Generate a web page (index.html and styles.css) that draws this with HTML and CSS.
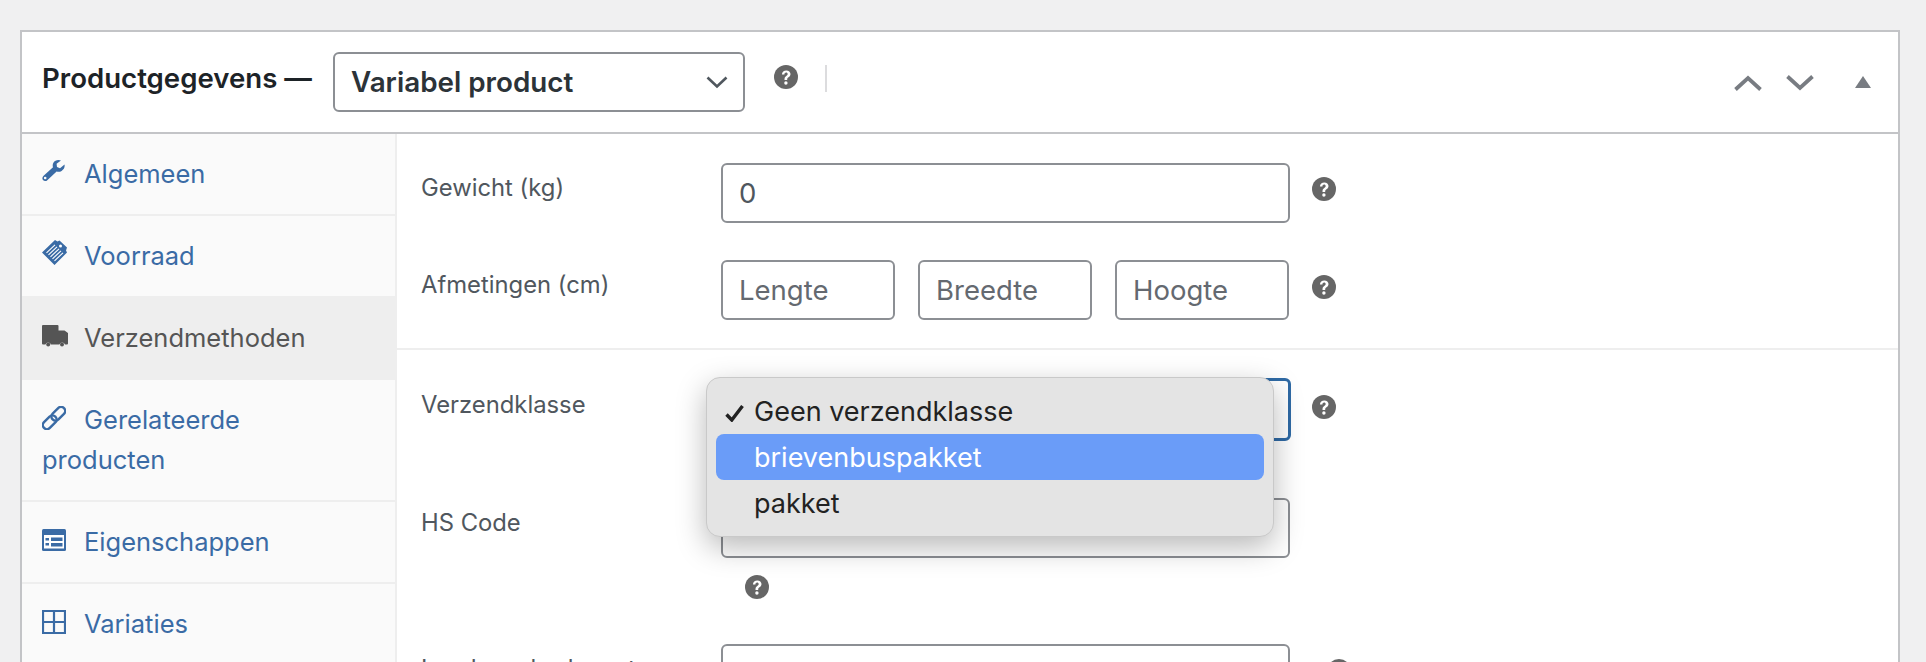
FILE: index.html
```html
<!DOCTYPE html>
<html lang="nl">
<head>
<meta charset="utf-8">
<title>Productgegevens</title>
<link rel="stylesheet" href="styles.css">
</head>
<body>
<svg class="defs" width="0" height="0" aria-hidden="true">
  <symbol id="help" viewBox="0 0 24 24">
    <circle cx="12" cy="12" r="12" fill="#666"/>
    <path d="M7.900 9.400C8.100 6.900 9.800 5.400 12.300 5.400c2.500 0 4.200 1.500 4.200 3.600 0 1.600-.9 2.500-2 3.300-1 .7-1.300 1.200-1.300 2.200v.4h-2.700v-.7c0-1.500.6-2.400 1.700-3.200 1-.7 1.500-1.200 1.500-2 0-.9-.7-1.500-1.600-1.500-1 0-1.600.7-1.700 1.900z" fill="#fff"/>
    <circle cx="11.900" cy="18" r="1.700" fill="#fff"/>
  </symbol>
</svg>
<div class="panel">
  <header class="head">
    <h2 class="title">Productgegevens —</h2>
    <div class="type-select">
      <span>Variabel product</span>
      <svg class="chev" viewBox="0 0 22 14"><path d="M1.500 2.500 11 11.500l9.500-9" fill="none" stroke="#50575e" stroke-width="2.600"/></svg>
    </div>
    <svg class="help head-help"><use href="#help"/></svg>
    <span class="sep"></span>
    <div class="handles">
      <svg class="h-arrow up" viewBox="0 0 28 16"><path d="M1.500 14.500 14 3l12.500 11.500" fill="none" stroke="#787c82" stroke-width="3.800"/></svg>
      <svg class="h-arrow down" viewBox="0 0 28 16"><path d="M1.500 1.500 14 13 26.500 1.500" fill="none" stroke="#787c82" stroke-width="3.800"/></svg>
      <svg class="h-tri" viewBox="0 0 16 12"><path d="M8 0l8 12H0z" fill="#787c82"/></svg>
    </div>
  </header>
  <div class="body">
    <nav class="tabs">
      <a class="tab">
        <svg class="ico" viewBox="0 0 24 24"><path d="M22.500 4.500 18 8.200l-3-1.200-.4-3.300L19 .6c-2.700-1.100-6.200-.4-7.600 2.200-.8 1.400-.9 3-.4 4.500L1.600 15.700C.2 17 0 18.700 1 20c1.100 1.300 3 1.400 4.300.2l9.300-8.700c1.700.5 3.500.3 5-.6 2.300-1.400 3.500-3.900 2.900-6.400zM3.200 19.300a1.300 1.300 0 1 1 0-2.600 1.300 1.300 0 0 1 0 2.600z" fill="#3a6ba5"/></svg>Algemeen</a>
      <a class="tab tab-plain">
        <svg class="ico ico-stock" viewBox="0 0 25 25"><path d="M0 12.500 13 0l2.500 1.500L17.500.5 25 7.500l-1 3 1 2L12.500 25z" fill="#3a6ba5"/><path d="M4.500 12.800 13 4.800M6.500 14.800 15 6.800M8.500 16.800 17 8.800M10.500 18.800 19 10.800M12.500 20.800 21 12.800" stroke="#fff" stroke-width="1.100"/><circle cx="18.500" cy="6" r="1.500" fill="#fff"/></svg>Voorraad</a>
      <a class="tab active">
        <svg class="ico truck" viewBox="0 0 26 22"><path d="M0 1a1 1 0 0 1 1-1h14.500a1 1 0 0 1 1 1v4.500h6L26 8v10.500a1 1 0 0 1-1 1h-2a3 3 0 0 0-5.600 0H9a3 3 0 0 0-5.600 0H1a1 1 0 0 1-1-1z" fill="#555"/><circle cx="6.200" cy="19.600" r="2" fill="#555"/><circle cx="20" cy="19.600" r="2" fill="#555"/></svg>Verzendmethoden</a>
      <a class="tab tab-wrap">
        <svg class="ico" viewBox="0 0 24 24"><g fill="none" stroke="#3a6ba5" stroke-width="2.400"><rect x="12.200" y="-.3" width="8.200" height="16" rx="4.100" transform="rotate(45 16.300 7.700)"/><rect x="3.600" y="8.300" width="8.200" height="16" rx="4.100" transform="rotate(45 7.700 16.300)"/></g></svg>Gerelateerde producten</a>
      <a class="tab">
        <svg class="ico" viewBox="0 0 24 22"><rect width="24" height="22" rx="1.500" fill="#3a6ba5"/><rect x="2" y="6" width="20" height="13.500" fill="#fff"/><path d="M3.500 9h3.500v2.500H3.500zM9 8.500h11.500V12H9zM3.500 14h3.500v2.500H3.500zM9 14h11.500v3.500H9z" fill="#3a6ba5"/></svg>Eigenschappen</a>
      <a class="tab">
        <svg class="ico" viewBox="0 0 24 24"><path d="M1 1h22v22H1zM12 1v22M1 12h22" fill="none" stroke="#3a6ba5" stroke-width="2.200"/></svg>Variaties</a>
    </nav>
    <main class="form">
      <section class="group first">
        <div class="row row-weight">
          <label class="lbl">Gewicht (kg)</label>
          <div class="field wide">0</div>
          <svg class="help"><use href="#help"/></svg>
        </div>
        <div class="row row-dims">
          <label class="lbl">Afmetingen (cm)</label>
          <div class="dims">
            <div class="field ph">Lengte</div>
            <div class="field ph">Breedte</div>
            <div class="field ph">Hoogte</div>
          </div>
          <svg class="help help-dims"><use href="#help"/></svg>
        </div>
      </section>
      <section class="group">
        <div class="row row-class">
          <label class="lbl">Verzendklasse</label>
          <div class="field wide focus"></div>
          <svg class="help"><use href="#help"/></svg>
        </div>
        <div class="row row-hs">
          <label class="lbl">HS Code</label>
          <div class="hs-col">
            <div class="field wide"></div>
            <svg class="help"><use href="#help"/></svg>
          </div>
        </div>
        <div class="row row-land">
          <label class="lbl">Land van herkomst</label>
          <div class="field wide"></div>
          <svg class="help"><use href="#help"/></svg>
        </div>
      </section>
      <div class="menu">
        <div class="opt"><svg class="check" viewBox="0 0 19 17"><path d="M1.500 9.500 6.800 15 17.500 1" fill="none" stroke="#222" stroke-width="3.400"/></svg>Geen verzendklasse</div>
        <div class="opt sel">brievenbuspakket</div>
        <div class="opt">pakket</div>
      </div>
    </main>
  </div>
</div>
</body>
</html>
```
FILE: styles.css
```css
* { box-sizing: border-box; }
html, body { margin: 0; height: 662px; overflow: hidden; }
body { background: #f0f0f1; padding: 30px 26px 0 20px; font-family: Inter, "Liberation Sans", sans-serif; color: #50575e; }
.defs { position: absolute; }
.panel { background: #fff; border: 2px solid #c3c4c7; border-bottom: 0; height: 632px; overflow: hidden; }
.head { height: 102px; border-bottom: 2px solid #c3c4c7; display: flex; align-items: flex-start; }
.title { margin: 27px 0 0 20px; width: 291px; font-size: 27.600px; line-height: 38px; font-weight: 600; color: #1d2327; white-space: nowrap; }
.type-select { margin-top: 20px; width: 412px; height: 60px; border: 2px solid #8c8f94; border-radius: 6px; display: flex; align-items: center; justify-content: space-between; padding: 0 15px 0 16px; font-size: 27.800px; font-weight: 600; color: #2c3338; }
.chev { width: 22px; height: 14px; }
.help { width: 24px; height: 24px; display: block; flex: none; }
.head-help { margin: 33px 0 0 29px; }
.sep { width: 2px; height: 27px; margin: 33px 0 0 27px; background: #dcdcde; }
.handles { margin-left: auto; display: flex; align-items: flex-start; padding: 43px 27px 0 0; }
.h-arrow { width: 28px; height: 16px; display: block; }
.h-arrow.up { margin-right: 24px; }
.h-arrow.down { margin-right: 41px; }
.h-tri { width: 16px; height: 12px; margin-top: 1px; display: block; }
.body { display: flex; height: 528px; }
.tabs { width: 375px; flex: none; background: #fafafa; border-right: 2px solid #eee; display: flex; flex-direction: column; }
.tab { display: block; padding: 20px; border-bottom: 2px solid #eee; font-size: 25.500px; line-height: 40px; color: #3a6ba5; }
.tab-plain { border-bottom: 0; }
.tab-wrap { padding-right: 60px; }
.tab.active { background: #eee; color: #555; padding: 22px 20px; border-bottom: 0; margin-right: -2px; }
.ico { width: 24px; height: 24px; display: inline-block; vertical-align: -1px; margin-right: 18px; }
.ico-stock { width: 25px; height: 25px; margin-right: 17px; vertical-align: 0; }
.ico.truck { width: 26px; height: 22px; margin-right: 16px; vertical-align: 0; }
.form { flex: 1; position: relative; }
.group { padding: 0 0 0 24px; }
.group.first { border-bottom: 2px solid #eee; height: 216px; padding-top: 29px; }
.row { display: flex; align-items: flex-start; }
.lbl { width: 300px; flex: none; padding-top: 9px; font-size: 23.800px; line-height: 32px; color: #50575e; white-space: nowrap; }
.field { height: 60px; border: 2px solid #8c8f94; border-radius: 6px; background: #fff; padding: 0 16px; font-size: 27.500px; line-height: 56px; color: #50575e; }
.wide { width: 569px; }
.row-weight { height: 97px; }
.row-weight .help { margin: 14px 0 0 22px; }
.row-dims .help { margin: 15px 0 0 22px; }
.dims { display: flex; gap: 23px; width: 569px; }
.dims .field { width: 174px; color: #646970; }
.row-class { height: 148px; padding-top: 29px; }
.row-class .lbl { padding-top: 10px; }
.row-class .help { margin: 16px 0 0 21px; }
.field.focus { border-color: #2f6aa5; border-width: 3px; height: 63px; width: 570px; margin-top: -1px; }
.row-hs { height: 146px; }
.hs-col { display: flex; flex-direction: column; }
.hs-col .help { margin: 17px 0 0 24px; }
.row-land .help { margin: 15px 0 0 37px; }
.menu { position: absolute; left: 309px; top: 243px; width: 568px; height: 160px; background: #e4e4e4; border: 1px solid #c9c9c9; border-radius: 14px; padding: 10px 9px; box-shadow: 0 10px 30px rgba(0,0,0,.28); font-size: 27px; color: #222; }
.opt { height: 46px; line-height: 47px; padding-left: 38px; border-radius: 8px; position: relative; white-space: nowrap; }
.opt.sel { background: #6a9cf8; color: #fff; }
.check { position: absolute; left: 9px; top: 17px; width: 19px; height: 17px; }
```
